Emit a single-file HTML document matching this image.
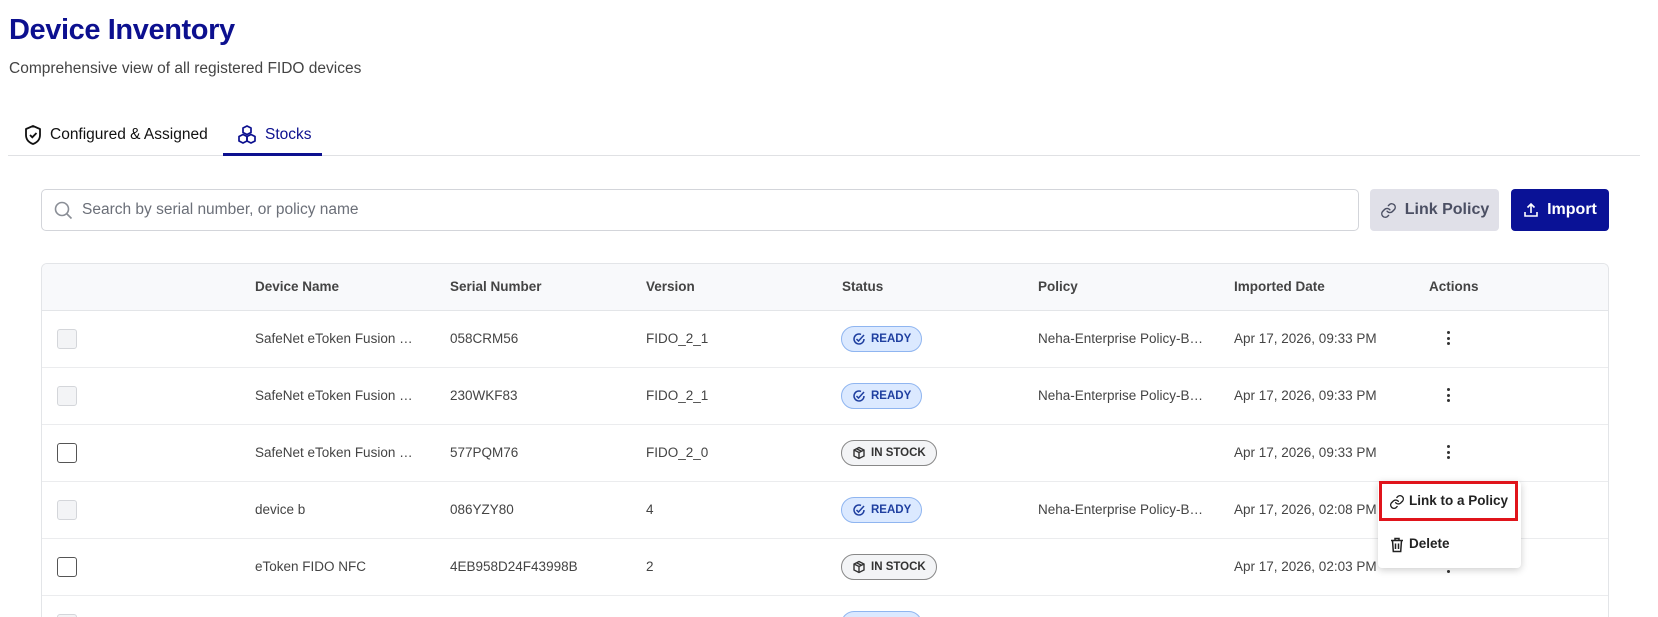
<!DOCTYPE html>
<html><head><style>
*{box-sizing:border-box;margin:0;padding:0}
html,body{width:1658px;height:617px;overflow:hidden}
body{background:#fff;font-family:"Liberation Sans",sans-serif;color:#333;position:relative}
.abs{position:absolute}
h1{position:absolute;left:9px;top:14px;font-size:29px;font-weight:bold;color:#0c108f;letter-spacing:-0.4px}
.sub{left:9px;top:60px;font-size:15.5px;color:#444}
.tab{top:124px;font-size:15.5px;display:flex;align-items:center;gap:7px}
.search{left:41px;top:189px;width:1318px;height:42px;border:1px solid #d3d5da;border-radius:5px}
.search span{position:absolute;left:40px;top:11px;font-size:15.5px;color:#6b6f78}
.btn{top:189px;height:42px;border-radius:4px;display:flex;align-items:center;justify-content:center;gap:8px;font-size:16px;font-weight:bold}
.table{left:41px;top:263px;width:1568px;height:354px;border:1px solid #e3e5e8;border-bottom:none;border-radius:6px 6px 0 0;overflow:hidden}
.hdr{left:0;top:0;width:100%;height:47px;background:#f8f9fb;border-bottom:1px solid #e3e5e8}
.th{top:15px;font-size:13.5px;font-weight:bold;color:#444}
.row{left:0;width:100%;height:57px;border-bottom:1px solid #ebecee}
.td{top:20px;font-size:13.5px;color:#444}
.cb{left:15px;top:18px;width:20px;height:20px;border:1.5px solid #555;border-radius:3px}
.cb.dis{border:1px solid #d4d6da;background:#f3f4f6}
.badge{left:799px;top:15px;height:26px;border-radius:13px;display:flex;align-items:center;gap:5px;padding:0 10px;font-size:11.5px;font-weight:bold}
.ready{background:#dbe9ff;border:1px solid #8fb5f0;color:#1f3fa0}
.stock{background:#f3f4f6;border:1px solid #888;color:#333}
.kebab{left:1405px;top:20px;width:4px}
.kebab i{display:block;width:3px;height:3px;border-radius:50%;background:#333;margin-bottom:2.5px}
.menu{left:1378px;top:481px;width:143px;height:87px;background:#fff;border-radius:4px;box-shadow:0 2px 8px rgba(0,0,0,.2)}
</style></head><body>
<h1>Device Inventory</h1>
<div class="abs sub">Comprehensive view of all registered FIDO devices</div>
<div class="abs tab" style="left:23px;color:#111">
<svg width="20" height="22" viewBox="0 0 20 22"><path d="M10 2 L17 5 V11 C17 15.5 14 18.5 10 20 C6 18.5 3 15.5 3 11 V5 Z" fill="none" stroke="#111" stroke-width="1.8" stroke-linejoin="round"/><path d="M7 11 L9.3 13.3 L13.5 9" fill="none" stroke="#111" stroke-width="1.8"/></svg>Configured &amp; Assigned</div>
<div class="abs tab" style="left:236px;color:#0c108f">
<svg width="22" height="22" viewBox="0 0 22 22" fill="none" stroke="#0c108f" stroke-width="1.7" stroke-linejoin="round"><path d="M11 2 L15 4 V8.5 L11 10.5 L7 8.5 V4 Z"/><path d="M7 10.5 L11 12.5 V17 L7 19 L3 17 V12.5 Z"/><path d="M15 10.5 L19 12.5 V17 L15 19 L11 17 V12.5 Z"/></svg>Stocks</div>
<div class="abs" style="left:8px;top:155px;width:1632px;height:1px;background:#e0e1e4"></div>
<div class="abs" style="left:223px;top:153px;width:99px;height:3px;background:#0c108f"></div>
<div class="abs search"><svg class="abs" style="left:12px;top:11px" width="19" height="19" viewBox="0 0 19 19" fill="none" stroke="#8a8e96" stroke-width="1.6"><circle cx="8" cy="8" r="6.5"/><path d="M13 13 L17.5 17.5"/></svg><span>Search by serial number, or policy name</span></div>
<div class="abs btn" style="left:1370px;width:129px;background:#e0e0e8;color:#4b4f63"><svg width="17" height="17" viewBox="0 0 24 24" fill="none" stroke="#4b4f63" stroke-width="2" stroke-linecap="round"><path d="M10 13a5 5 0 0 0 7.5.5l3-3a5 5 0 0 0-7-7l-1.7 1.7"/><path d="M14 11a5 5 0 0 0-7.5-.5l-3 3a5 5 0 0 0 7 7l1.7-1.7"/></svg>Link Policy</div>
<div class="abs btn" style="left:1511px;width:98px;background:#0a1296;color:#fff"><svg width="16" height="16" viewBox="0 0 16 16" fill="none" stroke="#fff" stroke-width="1.6"><path d="M8 11 V2 M4.5 5.5 L8 2 L11.5 5.5 M2 10 V14 H14 V10"/></svg>Import</div>
<div class="abs table">
<div class="abs hdr">
<div class="abs th" style="left:213px">Device Name</div>
<div class="abs th" style="left:408px">Serial Number</div>
<div class="abs th" style="left:604px">Version</div>
<div class="abs th" style="left:800px">Status</div>
<div class="abs th" style="left:996px">Policy</div>
<div class="abs th" style="left:1192px">Imported Date</div>
<div class="abs th" style="left:1387px">Actions</div>
</div>
<div class="abs row" style="top:47px"><div class="abs cb dis"></div><div class="abs td" style="left:213px">SafeNet eToken Fusion …</div><div class="abs td" style="left:408px">058CRM56</div><div class="abs td" style="left:604px">FIDO_2_1</div><div class="abs badge ready"><svg width="14" height="14" viewBox="0 0 14 14" fill="none" stroke="#1f3fa0" stroke-width="1.5"><path d="M12 7A5 5 0 1 1 9 2.4"/><path d="M4.5 7 L6.5 9 L12 3"/></svg>READY</div><div class="abs td" style="left:996px">Neha-Enterprise Policy-B…</div><div class="abs td" style="left:1192px">Apr 17, 2026, 09:33 PM</div><div class="abs kebab"><i></i><i></i><i></i></div></div>
<div class="abs row" style="top:104px"><div class="abs cb dis"></div><div class="abs td" style="left:213px">SafeNet eToken Fusion …</div><div class="abs td" style="left:408px">230WKF83</div><div class="abs td" style="left:604px">FIDO_2_1</div><div class="abs badge ready"><svg width="14" height="14" viewBox="0 0 14 14" fill="none" stroke="#1f3fa0" stroke-width="1.5"><path d="M12 7A5 5 0 1 1 9 2.4"/><path d="M4.5 7 L6.5 9 L12 3"/></svg>READY</div><div class="abs td" style="left:996px">Neha-Enterprise Policy-B…</div><div class="abs td" style="left:1192px">Apr 17, 2026, 09:33 PM</div><div class="abs kebab"><i></i><i></i><i></i></div></div>
<div class="abs row" style="top:161px"><div class="abs cb"></div><div class="abs td" style="left:213px">SafeNet eToken Fusion …</div><div class="abs td" style="left:408px">577PQM76</div><div class="abs td" style="left:604px">FIDO_2_0</div><div class="abs badge stock"><svg width="14" height="14" viewBox="0 0 14 14" fill="none" stroke="#333" stroke-width="1.4"><path d="M7 1.5 L12 4 V10 L7 12.5 L2 10 V4 Z M2 4 L7 6.5 L12 4 M7 6.5 V12.5 M4.5 2.8 L9.5 5.3"/></svg>IN STOCK</div><div class="abs td" style="left:1192px">Apr 17, 2026, 09:33 PM</div><div class="abs kebab"><i></i><i></i><i></i></div></div>
<div class="abs row" style="top:218px"><div class="abs cb dis"></div><div class="abs td" style="left:213px">device b</div><div class="abs td" style="left:408px">086YZY80</div><div class="abs td" style="left:604px">4</div><div class="abs badge ready"><svg width="14" height="14" viewBox="0 0 14 14" fill="none" stroke="#1f3fa0" stroke-width="1.5"><path d="M12 7A5 5 0 1 1 9 2.4"/><path d="M4.5 7 L6.5 9 L12 3"/></svg>READY</div><div class="abs td" style="left:996px">Neha-Enterprise Policy-B…</div><div class="abs td" style="left:1192px">Apr 17, 2026, 02:08 PM</div></div>
<div class="abs row" style="top:275px"><div class="abs cb"></div><div class="abs td" style="left:213px">eToken FIDO NFC</div><div class="abs td" style="left:408px">4EB958D24F43998B</div><div class="abs td" style="left:604px">2</div><div class="abs badge stock"><svg width="14" height="14" viewBox="0 0 14 14" fill="none" stroke="#333" stroke-width="1.4"><path d="M7 1.5 L12 4 V10 L7 12.5 L2 10 V4 Z M2 4 L7 6.5 L12 4 M7 6.5 V12.5 M4.5 2.8 L9.5 5.3"/></svg>IN STOCK</div><div class="abs td" style="left:1192px">Apr 17, 2026, 02:03 PM</div><div class="abs kebab"><i></i><i></i><i></i></div></div>
<div class="abs row" style="top:332px;border-bottom:none"><div class="abs cb dis"></div><div class="abs badge ready" style="width:81px"></div></div>
</div>
<div class="abs menu">
<div class="abs" style="left:1px;top:0;width:139px;height:40px;border:3px solid #e0141b"></div>
<svg class="abs" style="left:11px;top:13px" width="16" height="16" viewBox="0 0 24 24" fill="none" stroke="#222" stroke-width="2" stroke-linecap="round"><path d="M10 13a5 5 0 0 0 7.5.5l3-3a5 5 0 0 0-7-7l-1.7 1.7"/><path d="M14 11a5 5 0 0 0-7.5-.5l-3 3a5 5 0 0 0 7 7l1.7-1.7"/></svg>
<div class="abs" style="left:31px;top:12px;font-size:13.5px;font-weight:bold;color:#222">Link to a Policy</div>
<svg class="abs" style="left:12px;top:56px" width="14" height="16" viewBox="0 0 14 16" fill="none" stroke="#222" stroke-width="1.5"><path d="M1 3.5 H13 M5 3.5 V1.5 H9 V3.5 M2.5 3.5 L3.3 14.5 H10.7 L11.5 3.5 M5.5 6.5 V12 M8.5 6.5 V12"/></svg>
<div class="abs" style="left:31px;top:55px;font-size:13.5px;font-weight:bold;color:#222">Delete</div>
</div>
</body></html>
